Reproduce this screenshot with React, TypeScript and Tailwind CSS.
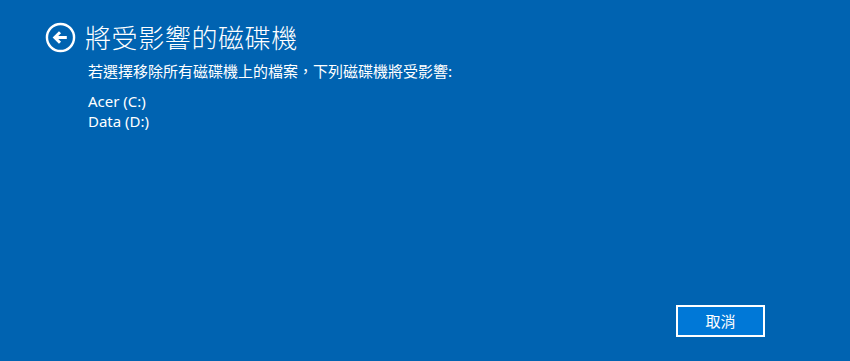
export default function App() {
  return (
    <div className="w-[850px] h-[361px] bg-[#0063b1] text-white overflow-hidden flex flex-col font-['Noto_Sans_CJK_TC',sans-serif]">
      <div className="flex items-center pl-[45px] pt-[21px]">
        <svg width="31" height="31" viewBox="0 0 32 32" className="shrink-0">
          <circle cx="16" cy="16" r="14" fill="none" stroke="white" strokeWidth="2.5" />
          <path d="M22.5 16 H10 M15.5 10.5 L10 16 L15.5 21.5" fill="none" stroke="white" strokeWidth="3" strokeLinecap="butt" strokeLinejoin="miter" />
        </svg>
        <h1 className="ml-[9px] text-[26px] leading-[32px] font-light tracking-[0.6px]">
          將受影響的磁碟機
        </h1>
      </div>
      <div className="pl-[88px] pt-[8px] text-[15px] leading-[20px]">
        若選擇移除所有磁碟機上的檔案，下列磁碟機將受影響:
      </div>
      <div className="pl-[88px] pt-[10px] text-[15px] leading-[20px] font-['Noto_Sans',sans-serif]">
        <div>Acer (C:)</div>
        <div>Data (D:)</div>
      </div>
      <div className="mt-auto flex justify-end pr-[85px] pb-[24px]">
        <button className="w-[89px] h-[32px] border-2 border-white bg-[#0078d7] text-[15px] text-white">
          取消
        </button>
      </div>
    </div>
  );
}
